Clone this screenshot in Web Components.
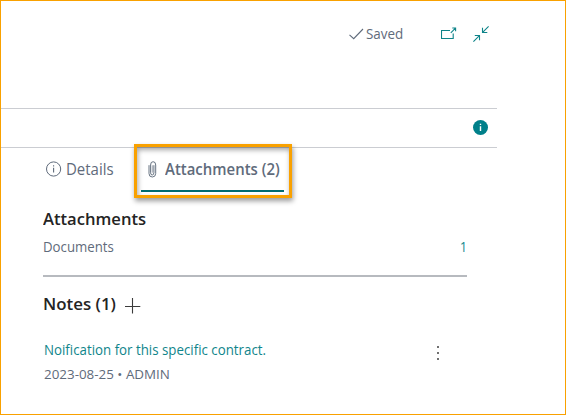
<!DOCTYPE html>
<html lang="en"><head><meta charset="utf-8"><title>Attachments</title>
<style>html,body{margin:0;height:100%;background:#fff}body{font-family:"Open Sans","Noto Sans",sans-serif;color:#5f6b7b}</style></head>
<body><fact-page></fact-page>
<script>
const define = (name, html, setup) => customElements.define(name, class extends HTMLElement {
  connectedCallback() {
    if (this.shadowRoot) return;
    const t = document.createElement('template');
    t.innerHTML = html;
    this.attachShadow({mode: 'open'}).append(t.content.cloneNode(true));
    if (setup) setup(this, this.shadowRoot);
  }
});

// One line of text condensed or widened to a given advance width.
define('fit-text', `<style>:host{display:block;white-space:nowrap;flex:none}span{display:inline-block;transform-origin:0 50%}</style><span><slot></slot></span>`,
  (el, root) => {
    const w = +el.getAttribute('width'), s = root.querySelector('span');
    el.style.width = w + 'px';
    requestAnimationFrame(() => { s.style.transform = `scaleX(${w / s.offsetWidth})`; });
  });

const icons = {
  check: [16, 14, '<path d="M1.5 7.9 5.7 11.7 15 2" stroke="#5f6b7b" stroke-width="1.1"/>'],
  popout: [16, 14, '<path d="M9 3.5H.5V11.5H12.2V6.5M9.8 5.8 14.5 1.1M11.3 1H14.6V4.3" stroke="#0e8489" stroke-width="1.1"/>'],
  collapse: [16, 16, '<path d="M15.6.4 9.6 6.4M9.5 1.8V6.5H14.3M.4 15.6 6.4 9.6M1.8 9.5H6.5V14.3" stroke="#0e8489" stroke-width="1.1"/>'],
  info: [16, 16, '<circle cx="7.6" cy="8" r="7.1" stroke="#5f6b7b"/><path d="M7.6 6.8V11.6M7.6 4.2V5.4" stroke="#5f6b7b" stroke-width="1.1"/>'],
  badge: [15, 15, '<circle cx="7.5" cy="7.5" r="7.5" fill="#00808a"/><path d="M7.5 6.2V11M7.5 3.8V5.1" stroke="#fff" stroke-width="1.4"/>'],
  clip: [9, 17, '<path d="M1 4.2V12.5Q1 16 4.3 16T7.7 12.5V4Q7.7.7 5.1.7T2.6 4V11.8Q2.6 14 4.2 14T5.9 11.8V4.2" stroke="#5f6b7b" stroke-width=".95"/><path d="M4.3 4.3V11.7" stroke="#8992a0" stroke-width=".8"/>'],
  plus: [16, 16, '<path d="M7.5 0V15.5M0 8.5H15.3" stroke="#3b3b3b" stroke-width="1.1"/>'],
  more: [2, 14, '<path d="M0 0H2V2H0ZM0 6H2V8H0ZM0 12H2V14H0Z" fill="#707070"/>']
};
define('line-icon', `<style>:host{display:block;flex:none}svg{display:block}</style>`, (el, root) => {
  const [w, h, d] = icons[el.getAttribute('name')];
  root.innerHTML += `<svg width="${w}" height="${h}" viewBox="0 0 ${w} ${h}" fill="none">${d}</svg>`;
});

define('page-header', `<style>
:host{display:block;width:496px}
.top{height:107px;box-sizing:border-box;padding:23px 8px 0 347px;display:flex;align-items:flex-start}
fit-text{font-size:13.6px;line-height:20px;margin-left:2px}
.check{margin-top:3px}.pop{margin:3px 0 0 37px}.fold{margin:2px 0 0 16px}
.band{height:38px;border:solid #cbcdd2;border-width:1px 0;display:flex;align-items:flex-start;justify-content:flex-end;padding:11px 9px 0 0;box-sizing:content-box;height:27px}
</style><div class="top"><line-icon class="check" name="check"></line-icon><fit-text width="37.5">Saved</fit-text><line-icon class="pop" name="popout"></line-icon><line-icon class="fold" name="collapse"></line-icon></div>
<div class="band"><line-icon name="badge"></line-icon></div>`);

define('tab-item', `<style>
:host{display:flex;box-sizing:border-box;font-size:15.6px;line-height:22px}
:host([selected]){position:relative;z-index:1;width:158px;height:54px;border:3px solid #f9a100;box-shadow:1px 3px 5px rgba(0,0,0,.4),inset 1px 3px 5px rgba(0,0,0,.35);padding:0 5px 3px 4px;font-weight:600}
.in{display:flex;flex:1;align-items:flex-start}
:host([selected]) .in{border-bottom:2px solid #006b70;padding:11px 0 0 7px}
</style><div class="in"><slot></slot></div>`);

define('fact-tabs', `<style>:host{display:flex;margin-top:-4px;padding-left:45px;height:54px}
.details{width:88px;padding-top:14px}.i{margin-top:3px}.dt{margin-left:4px}.clip{margin-top:3px}.at{margin-left:7.5px}
</style><tab-item class="details"><line-icon class="i" name="info"></line-icon><fit-text class="dt" width="48">Details</fit-text></tab-item>
<tab-item selected><line-icon class="clip" name="clip"></line-icon><fit-text class="at" width="115">Attachments (2)</fit-text></tab-item>`);

define('fact-section', `<style>:host{display:block;color:#242424;font-size:17px;font-weight:600;line-height:24px}.h{display:flex;align-items:center}</style><div class="h"><slot name="title"></slot></div><slot></slot>`);

define('note-item', `<style>:host{display:flex;justify-content:space-between;padding:22px 28px 0 1px;font-weight:400}
.t{font-size:13.9px;line-height:22px;color:#0f858b;margin-top:1px}.m{font-size:12.6px;line-height:20px;color:#5f6b7b;margin-top:4px}line-icon{margin-top:8px}
</style><div><fit-text class="t" width="222"><slot name="text"></slot></fit-text><fit-text class="m" width="125.5"><slot name="meta"></slot></fit-text></div><line-icon name="more"></line-icon>`);

define('fact-page', `<style>
:host{display:block;width:566px;height:415px;box-sizing:border-box;border:1px solid #f9a100;background:#fff;overflow:hidden}
.body{width:424px;padding:9px 0 0 42px}
.row{display:flex;justify-content:space-between;font-size:13.9px;line-height:22px;font-weight:400;color:#5f6b7b;margin-top:5px;height:39px}
.n{color:#0f858b}hr{height:2px;border:0;background:#b7babf;margin:0}
.notes{margin-top:15px;font-weight:550}.notes .plus{margin:3px 0 0 9px}
</style><page-header></page-header><fact-tabs></fact-tabs>
<div class="body"><fact-section><fit-text slot="title" width="103.5">Attachments</fit-text>
<div class="row"><fit-text width="70.5">Documents</fit-text><fit-text class="n" width="7">1</fit-text></div><hr></fact-section>
<fact-section class="notes"><fit-text slot="title" width="72.5">Notes (1)</fit-text><line-icon slot="title" class="plus" name="plus"></line-icon>
<note-item><span slot="text">Noification for this specific contract.</span><span slot="meta">2023-08-25 • ADMIN</span></note-item></fact-section></div>`);
</script></body></html>
